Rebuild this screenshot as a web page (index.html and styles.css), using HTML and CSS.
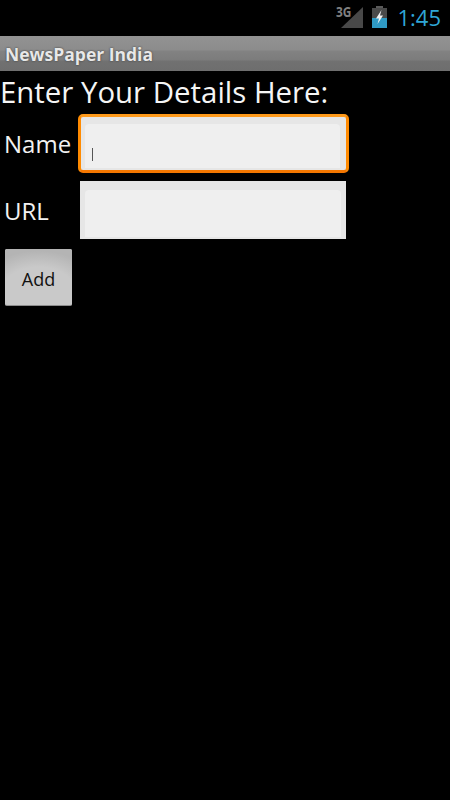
FILE: index.html
```html
<!DOCTYPE html>
<html lang="en">
<head>
<meta charset="utf-8">
<title>NewsPaper India</title>
<link rel="stylesheet" href="styles.css">
</head>
<body>
<div class="status-bar">
  <div class="signal">
    <span class="net">3G</span>
    <svg class="bars" width="22" height="21" viewBox="0 0 22 21"><path d="M22 0V21H0Z" fill="#484848"/></svg>
  </div>
  <svg class="battery" width="15" height="22" viewBox="0 0 15 22">
    <rect x="4" y="0" width="7" height="2" fill="#5a5a5a"/>
    <rect x="0" y="2" width="15" height="10" fill="#4a4a4a"/>
    <rect x="0" y="12" width="15" height="10" fill="#2f9ac4"/>
    <path d="M9.5 4 4 12.5H7L5.5 18 11 9.5H8Z" fill="#f2f2f2"/>
  </svg>
  <span class="clock">1:45</span>
</div>
<div class="title-bar">NewsPaper India</div>
<main class="content">
  <h1 class="heading">Enter Your Details Here:</h1>
  <div class="form-row row-name">
    <label class="label">Name</label>
    <div class="field field-focus"><div class="field-inner"><span class="caret"></span></div></div>
  </div>
  <div class="form-row row-url">
    <label class="label">URL</label>
    <div class="field"><div class="field-inner"></div></div>
  </div>
  <button class="add-button" type="button">Add</button>
</main>
</body>
</html>
```
FILE: styles.css
```css
* { box-sizing: border-box; }
html, body { margin: 0; padding: 0; }
body {
  width: 450px;
  height: 800px;
  overflow: hidden;
  background: #000;
  color: #f2f2f2;
  font-family: "Open Sans", Roboto, sans-serif;
}
.status-bar {
  height: 36px;
  display: flex;
  align-items: flex-start;
  justify-content: flex-end;
  padding-right: 9px;
}
.signal { position: relative; width: 27px; height: 28px; margin-right: 9px; }
.net {
  position: absolute;
  left: 0;
  top: 4px;
  font-size: 14px;
  line-height: 16px;
  font-weight: 700;
  color: #808080;
  transform: scaleX(0.85);
  transform-origin: left center;
}
.bars { position: absolute; left: 5px; top: 7px; }
.battery { margin: 6px 10px 0 0; }
.clock {
  font-size: 22px;
  line-height: 26px;
  margin-top: 4px;
  color: #2fa6d6;
}
.title-bar {
  height: 35px;
  padding-left: 5px;
  line-height: 36px;
  font-size: 17.5px;
  font-weight: 700;
  color: #e8e8e8;
  text-shadow: 0 0 2px #333;
  background: linear-gradient(#929292 0, #8c8c8c 14px, #828282 15px, #7c7c7c 24px, #717171 25px, #6e6e6e 100%);
}
.content { display: flex; flex-direction: column; align-items: flex-start; }
.heading {
  margin: 3px 0 0;
  height: 40px;
  line-height: 36px;
  font-size: 29.4px;
  font-weight: 400;
  color: #f5f5f5;
  white-space: nowrap;
}
.form-row { display: flex; align-items: center; }
.row-name { height: 59px; }
.row-url { height: 58px; margin-top: 8px; }
.label { width: 78px; padding-left: 4px; font-size: 24px; line-height: 32px; color: #f2f2f2; }
.row-url .label { padding-top: 2px; }
.field {
  width: 266px;
  height: 58px;
  margin-left: 2px;
  padding: 9px 5px 2px;
  background: #e6e6e6;
}
.field-inner { height: 100%; background: #efefef; border-radius: 4px 4px 0 0; padding: 24px 0 0 7px; }
.field-focus {
  width: 271px;
  height: 59px;
  margin-left: 0;
  padding: 7px 6px 2px 4px;
  border: 3px solid #ff8a00;
  border-top-color: #ff9a1a;
  border-bottom-color: #f57700;
  border-radius: 5px;
}
.caret { display: block; width: 1px; height: 13px; background: #555; }
.add-button {
  width: 67px;
  height: 57px;
  margin: 10px 0 0 5px;
  padding: 3px 0 0;
  border: 0;
  border-bottom: 1px solid #8c8c8c;
  border-radius: 2px;
  font-family: inherit;
  font-size: 18px;
  color: #111;
  background: radial-gradient(ellipse 60px 40px at 50% 75%, #c9c9c9 60%, #b4b4b4 100%), #c4c4c4;
}
```
